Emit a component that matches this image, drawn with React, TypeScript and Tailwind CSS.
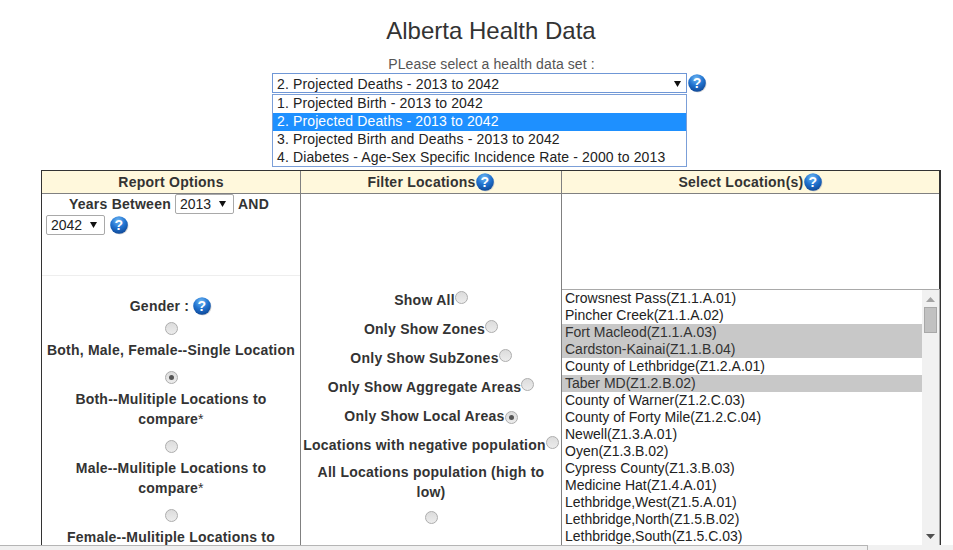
const datasets = [
  "1. Projected Birth - 2013 to 2042",
  "2. Projected Deaths - 2013 to 2042",
  "3. Projected Birth and Deaths - 2013 to 2042",
  "4. Diabetes - Age-Sex Specific Incidence Rate - 2000 to 2013",
];

const filters = [
  { label: "Show All" },
  { label: "Only Show Zones" },
  { label: "Only Show SubZones" },
  { label: "Only Show Aggregate Areas" },
  { label: "Only Show Local Areas", checked: true },
  { label: "Locations with negative population" },
];

const locations = [
  { name: "Crowsnest Pass(Z1.1.A.01)" },
  { name: "Pincher Creek(Z1.1.A.02)" },
  { name: "Fort Macleod(Z1.1.A.03)", selected: true },
  { name: "Cardston-Kainai(Z1.1.B.04)", selected: true },
  { name: "County of Lethbridge(Z1.2.A.01)" },
  { name: "Taber MD(Z1.2.B.02)", selected: true },
  { name: "County of Warner(Z1.2.C.03)" },
  { name: "County of Forty Mile(Z1.2.C.04)" },
  { name: "Newell(Z1.3.A.01)" },
  { name: "Oyen(Z1.3.B.02)" },
  { name: "Cypress County(Z1.3.B.03)" },
  { name: "Medicine Hat(Z1.4.A.01)" },
  { name: "Lethbridge,West(Z1.5.A.01)" },
  { name: "Lethbridge,North(Z1.5.B.02)" },
  { name: "Lethbridge,South(Z1.5.C.03)" },
];

function HelpIcon({ id }: { id: string }) {
  return (
    <svg width="19" height="19" viewBox="0 0 19 19" className="inline-block shrink-0 align-middle">
      <defs>
        <radialGradient id={id} cx="45%" cy="25%" r="80%">
          <stop offset="0%" stopColor="#6fb8f5" />
          <stop offset="50%" stopColor="#2274d0" />
          <stop offset="100%" stopColor="#0d4391" />
        </radialGradient>
      </defs>
      <circle cx="10" cy="10" r="8.5" fill="#bbb" opacity="0.6" />
      <circle cx="9" cy="9" r="8.8" fill={`url(#${id})`} />
      <text
        x="9"
        y="13.6"
        textAnchor="middle"
        fontSize="14"
        fontWeight="700"
        fontFamily="Liberation Sans, sans-serif"
        fill="#fff"
      >
        ?
      </text>
    </svg>
  );
}

function Radio({ checked = false }: { checked?: boolean }) {
  return (
    <span className="inline-flex h-[13px] w-[13px] shrink-0 items-center justify-center rounded-full border border-[#adadad] bg-gradient-to-b from-[#dcdcdc] to-[#ececec]">
      {checked && <span className="h-[5px] w-[5px] rounded-full bg-[#555]" />}
    </span>
  );
}

function Caret() {
  return (
    <svg width="7" height="6" viewBox="0 0 7 6" className="shrink-0">
      <path d="M0 0h7L3.5 6z" fill="#111" />
    </svg>
  );
}

function YearSelect({ value }: { value: string }) {
  return (
    <span className="inline-flex h-5 w-[59px] items-center justify-between rounded-[2px] border border-[#a9a9a9] bg-white pl-[4px] pr-[7px] align-middle text-sm font-normal tracking-normal text-[#222]">
      {value}
      <Caret />
    </span>
  );
}

function HeaderCell({ children, last }: { children: React.ReactNode; last?: boolean }) {
  return (
    <div
      className={`flex items-center justify-center ${
        last ? "" : "border-r border-[#808080]"
      } text-sm font-bold tracking-[0.25px] text-[#333]`}
    >
      {children}
    </div>
  );
}

function GenderOption({ lines, checked, star }: { lines: string[]; checked?: boolean; star?: boolean }) {
  return (
    <div className="flex flex-col items-center gap-[5px]">
      <div className="flex pl-[1px]">
        <Radio checked={checked} />
      </div>
      <div className="text-center text-sm leading-5 font-bold tracking-[0.22px] whitespace-nowrap text-[#333]">
        {lines[0]}
        {lines[1] && <br />}
        {lines[1]}
        {star && <span className="font-normal">*</span>}
      </div>
    </div>
  );
}

export default function App() {
  return (
    <div className="relative h-[550px] w-[953px] overflow-hidden bg-white font-['Liberation_Sans',Arial,sans-serif] text-[#333]">
      <h1 className="pt-[17px] pl-[29px] text-center text-2xl leading-[28px] font-normal text-[#333]">
        Alberta Health Data
      </h1>

      <p className="mt-[11px] pl-[30px] text-center text-sm leading-4 tracking-[0.1px] text-[#555]">
        PLease select a health data set :
      </p>

      <div className="mt-[1px] ml-[272px] flex items-center">
        <div className="mr-[1px] flex h-5 w-[415px] items-center justify-between border border-[#6f97d6] bg-white pt-[1px] pr-[5px] pl-[4px] text-sm tracking-[0.15px] text-[#222]">
          2. Projected Deaths - 2013 to 2042
          <Caret />
        </div>
        <HelpIcon id="help-top" />
      </div>

      <div className="absolute top-[94px] left-[272px] z-10 w-[415px] border border-[#7b9fd8] bg-white text-sm tracking-[0.13px] text-[#222]">
        {datasets.map((d, i) => (
          <div
            key={d}
            className={`flex items-center pl-[4px] ${i === 3 ? "h-[17px] pb-[1px]" : "h-[18px] pb-[2px]"} ${
              i === 1 ? "bg-[#1e90ff] text-white" : ""
            }`}
          >
            {d}
          </div>
        ))}
      </div>

      <div className="mt-[77px] ml-[41px] h-[400px] w-[900px] border-t border-l border-r-2 border-[#333]">
        <div className="grid h-[23px] grid-cols-[259px_261px_1fr] border-b border-[#808080] bg-[#fff8dc]">
          <HeaderCell>Report Options</HeaderCell>
          <HeaderCell>
            Filter Locations
            <HelpIcon id="help-filter" />
          </HeaderCell>
          <HeaderCell last>
            Select Location(s)
            <HelpIcon id="help-select" />
          </HeaderCell>
        </div>

        <div className="grid h-[360px] grid-cols-[259px_261px_1fr]">
          <div className="border-r border-[#808080]">
            <div className="h-[82px] border-b border-[#eee] pl-[4px] text-sm leading-[20px] font-bold tracking-[0.25px] text-[#333]">
              <div className="flex items-center justify-center gap-[4px] pr-[8px]">
                Years Between <YearSelect value="2013" /> AND
              </div>
              <div className="mt-[1px] flex items-center gap-[5px]">
                <YearSelect value="2042" />
                <HelpIcon id="help-years" />
              </div>
            </div>

            <div className="flex flex-col items-center gap-[11px] pt-[20px]">
              <div className="-mb-[5px] flex h-5 items-center justify-center gap-[4px] text-sm font-bold tracking-[0.25px] text-[#333]">
                Gender : <HelpIcon id="help-gender" />
              </div>
              <GenderOption lines={["Both, Male, Female--Single Location"]} />
              <GenderOption lines={["Both--Mulitiple Locations to", "compare"]} star checked />
              <GenderOption lines={["Male--Mulitiple Locations to", "compare"]} star />
              <GenderOption lines={["Female--Mulitiple Locations to", "compare"]} star />
            </div>
          </div>

          <div className="flex flex-col items-center border-r border-[#808080] pt-[96px] text-sm font-bold tracking-[0.25px] text-[#333]">
            {filters.map((f) => (
              <div key={f.label} className="flex h-[29px] items-start leading-5 whitespace-nowrap">
                {f.label}
                <span className="-mt-[1px]">
                  <Radio checked={f.checked} />
                </span>
              </div>
            ))}
            <div className="-mt-[2px] px-2 text-center leading-5">All Locations population (high to low)</div>
            <div className="mt-[9px] flex">
              <Radio />
            </div>
          </div>

          <div className="pt-[95px]">
            <div className="flex h-[270px] w-[378px] border-t border-r border-[#a9a9a9]">
              <div className="w-[361px] text-sm leading-[17px] text-[#222]">
                {locations.map((l) => (
                  <div key={l.name} className={`h-[17px] pl-[3px] ${l.selected ? "bg-[#c8c8c8] text-[#333]" : ""}`}>
                    {l.name}
                  </div>
                ))}
              </div>
              <div className="flex h-[256px] w-[17px] flex-col items-center bg-[#f1f1f1]">
                <svg width="9" height="5" viewBox="0 0 9 5" className="mt-[7px]">
                  <path d="M0 5L4.5 0L9 5z" fill="#a3a3a3" />
                </svg>
                <div className="mt-[5px] h-[26px] w-[13px] border border-[#a8a8a8] bg-[#c1c1c1]" />
                <svg width="9" height="5" viewBox="0 0 9 5" className="mt-auto mb-[7px]">
                  <path d="M0 0L4.5 5L9 0z" fill="#505050" />
                </svg>
              </div>
            </div>
          </div>
        </div>
      </div>

      <div className="absolute right-0 bottom-0 left-0 z-20 h-[5px] bg-[#f1f1f1]">
        <div className="h-full w-[868px] rounded-tr-[1px] border-t border-r border-[#b5b5b5] bg-[#f0f0f0]" />
      </div>
    </div>
  );
}
